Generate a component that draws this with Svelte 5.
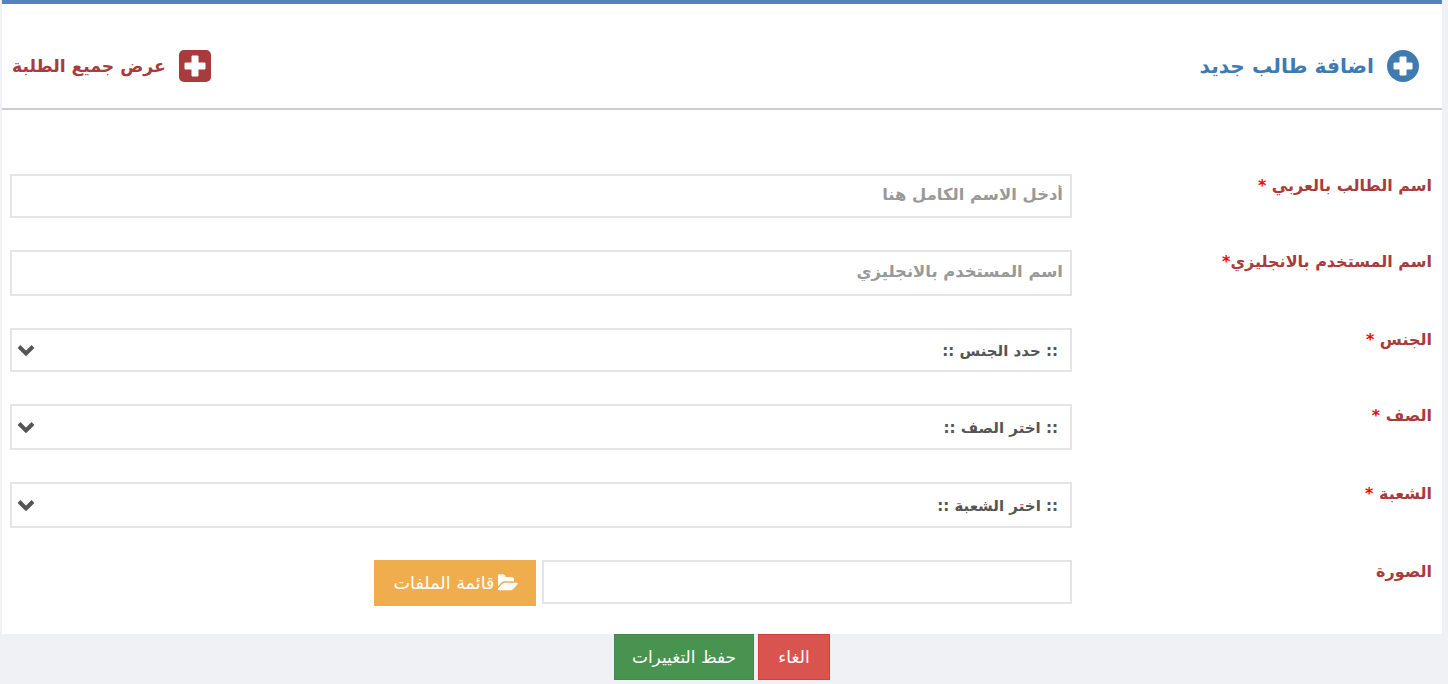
<script>
	const rows = [
		{ label: 'اسم الطالب بالعربي', star: ' *', placeholder: 'أدخل الاسم الكامل هنا' },
		{ label: 'اسم المستخدم بالانجليزي', star: '*', placeholder: 'اسم المستخدم بالانجليزي', tall: true },
		{ label: 'الجنس', star: ' *', option: ':: حدد الجنس ::' },
		{ label: 'الصف', star: ' *', option: ':: اختر الصف ::', tall: true },
		{ label: 'الشعبة', star: ' *', option: ':: اختر الشعبة ::', tall: true }
	];
</script>

<main dir="rtl">
	<section class="panel">
		<header class="head">
			<h2 class="title">
				<svg class="icon" viewBox="0 0 32 32" aria-hidden="true">
					<circle cx="16" cy="16" r="16" fill="#3f7ab0" />
					<path d="M13 7h6v6h6v6h-6v6h-6v-6H7v-6h6z" fill="#fff" stroke="#fff" stroke-linejoin="round" />
				</svg>
				اضافة طالب جديد
			</h2>
			<a class="all" href="#all">
				<svg class="icon" viewBox="0 0 32 32" aria-hidden="true">
					<rect width="32" height="32" rx="5" fill="#a83c3c" />
					<path d="M13 6h6v7h7v6h-7v7h-6v-7H6v-6h7z" fill="#fff" stroke="#fff" stroke-linejoin="round" />
				</svg>
				عرض جميع الطلبة
			</a>
		</header>

		<form class="form">
			{#each rows as row}
				<label class="lbl" for={row.label}>{row.label}<span class="req">{row.star}</span></label>
				{#if row.option}
					<div class="select-wrap" class:tall={row.tall}>
						<select id={row.label} class="field">
							<option>{row.option}</option>
						</select>
						<svg class="chevron" viewBox="0 0 20 14" aria-hidden="true">
							<path d="M3 3.5l7 7 7-7" fill="none" stroke="#555" stroke-width="4" />
						</svg>
					</div>
				{:else}
					<input id={row.label} class="field" class:tall={row.tall} placeholder={row.placeholder} />
				{/if}
			{/each}

			<label class="lbl" for="photo">الصورة</label>
			<div class="file-row">
				<input id="photo" class="field" />
				<button class="btn orange" type="button">
					<svg class="folder" viewBox="0 0 1792 1792" aria-hidden="true">
						<path d="M1781 931q0 35-53 93l-336 396q-43 51-120.5 86.5t-143.5 35.5h-1088q-34 0-60.5-13t-26.5-43q0-35 53-93l336-396q43-51 120.5-86.5t143.5-35.5h1088q34 0 60.5 13t26.5 43zm-343-344v160h-832q-94 0-197 47.5t-164 119.5l-337 396-5 6q0-4-.5-12.5t-.5-12.5v-960q0-92 66-158t158-66h320q92 0 158 66t66 158v32h544q92 0 158 66t66 158z" fill="#fff" />
					</svg>
					قائمة الملفات
				</button>
			</div>
		</form>
	</section>

	<footer class="actions">
		<button class="btn red" type="button">الغاء</button>
		<button class="btn green" type="button">حفظ التغييرات</button>
	</footer>
</main>

<style>
	:global(body) {
		background: #f0f1f5;
		font-family: 'DejaVu Sans', 'Noto Sans', sans-serif;
	}

	main {
		padding: 0 6px 0 2px;
		height: 684px;
		box-sizing: border-box;
		overflow: hidden;
	}

	.panel {
		background: #fff;
		border-top: 4px solid #5285bf;
		height: 630px;
	}

	.head {
		display: flex;
		justify-content: space-between;
		align-items: center;
		height: 106px;
		box-sizing: border-box;
		border-bottom: 2px solid #ccc;
		padding: 20px 23px 0 10px;
	}

	.title,
	.all {
		display: flex;
		align-items: center;
		gap: 13px;
		margin: 0;
		font-weight: 700;
		text-decoration: none;
	}

	.title {
		color: #3f7ab0;
		font-size: 20.2px;
	}

	.all {
		color: #a83c3c;
		font-size: 17.2px;
	}

	.icon {
		width: 32px;
		height: 32px;
		flex: none;
	}

	.form {
		display: grid;
		grid-template-columns: 360px 1062px;
		row-gap: 32px;
		padding: 64px 10px 0 8px;
		justify-content: start;
	}

	.lbl {
		color: #a83c3c;
		font-size: 16px;
		font-weight: 700;
		padding-top: 2px;
	}

	.req {
		color: #f00;
		white-space: pre;
	}

	.field {
		display: block;
		width: 100%;
		height: 44px;
		box-sizing: border-box;
		border: 2px solid #e5e5e5;
		border-radius: 0;
		background: #fff;
		padding: 0 7px 3px;
		font: 700 16.4px 'DejaVu Sans', sans-serif;
		color: #555;
		outline: none;
	}

	.field.tall,
	.tall .field {
		height: 46px;
	}

	.field::placeholder {
		color: #999;
		opacity: 1;
	}

	select.field {
		appearance: none;
		padding: 2px 12px 0;
		font-size: 15px;
	}

	.select-wrap {
		position: relative;
	}

	.chevron {
		position: absolute;
		left: 6px;
		top: 50%;
		width: 20px;
		height: 14px;
		transform: translateY(-50%);
		pointer-events: none;
	}

	.file-row {
		display: flex;
		gap: 6px;
		align-items: flex-start;
	}

	.file-row .field {
		width: 530px;
	}

	.btn {
		height: 46px;
		border: 1px solid transparent;
		border-radius: 0;
		color: #fff;
		font: 400 17px 'DejaVu Sans', sans-serif;
		display: inline-flex;
		align-items: center;
		justify-content: center;
		gap: 4px;
		padding: 0;
	}

	.orange {
		width: 162px;
		background: #f0ad4e;
		border-color: #f0ad4e;
		font-size: 17.6px;
		gap: 4px;
		padding-left: 2px;
	}

	.folder {
		width: 20px;
		height: 20px;
	}

	.actions {
		display: flex;
		justify-content: center;
		gap: 4px;
	}

	.red {
		width: 72px;
		background: #d9534f;
		border-color: #d43f3a;
	}

	.green {
		width: 140px;
		background: #47934f;
		border-color: #3f8a47;
	}
</style>
